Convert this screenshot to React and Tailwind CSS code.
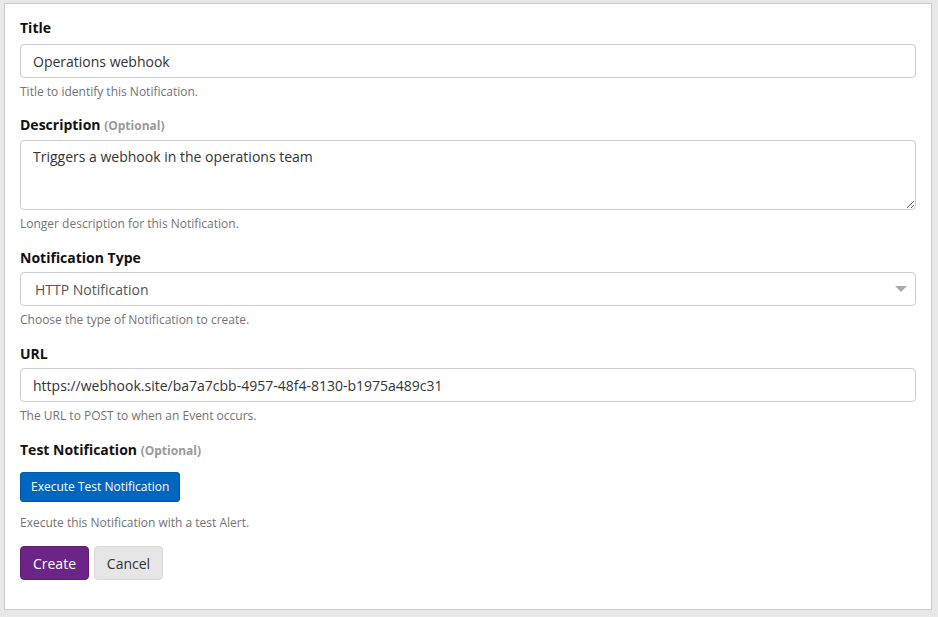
export default function App() {
  const font = { fontFamily: '"Open Sans", "Noto Sans", sans-serif' };
  return (
    <div className="w-[938px] h-[617px] bg-[#e8e8e8] pt-[3px] pl-[4px]" style={font}>
      <div className="w-[928px] h-[607px] bg-white border border-[#cccccc] px-[15px] pt-[14px]">
        <div className="flex flex-col">
          <label className="text-[14px] font-bold text-[#111] leading-[20px]">Title</label>
          <input
            readOnly
            value="Operations webhook"
            className="mt-[6px] h-[34px] w-full border border-[#cccccc] rounded-[4px] px-[12px] text-[14px] text-[#333] outline-none"
            style={font}
          />
          <p className="mt-[5px] text-[12px] text-[#737373] leading-[17px]">Title to identify this Notification.</p>

          <label className="mt-[15px] text-[14px] font-bold text-[#111] leading-[20px]">
            Description <span className="text-[12px] text-[#999]">(Optional)</span>
          </label>
          <textarea
            readOnly
            value="Triggers a webhook in the operations team"
            className="mt-[4px] h-[70px] w-full border border-[#cccccc] rounded-[4px] px-[12px] py-[6px] text-[14px] text-[#333] outline-none leading-[20px] block"
            style={font}
          />
          <p className="mt-[5px] text-[12px] text-[#737373] leading-[17px]">Longer description for this Notification.</p>

          <label className="mt-[16px] text-[14px] font-bold text-[#111] leading-[20px]">Notification Type</label>
          <div className="mt-[4px] h-[34px] w-full border border-[#cccccc] rounded-[4px] pl-[14px] pr-[8px] flex items-center justify-between text-[14px] text-[#555]">
            <span>HTTP Notification</span>
            <svg width="12" height="7" viewBox="0 0 12 7"><path d="M0 0 L12 0 L6 6 Z" fill="#aaaaaa" /></svg>
          </div>
          <p className="mt-[5px] text-[12px] text-[#737373] leading-[17px]">Choose the type of Notification to create.</p>

          <label className="mt-[16px] text-[14px] font-bold text-[#111] leading-[20px]">URL</label>
          <input
            readOnly
            value="https://webhook.site/ba7a7cbb-4957-48f4-8130-b1975a489c31"
            className="mt-[4px] h-[34px] w-full border border-[#cccccc] rounded-[4px] px-[12px] text-[14px] text-[#333] outline-none"
            style={font}
          />
          <p className="mt-[5px] text-[12px] text-[#737373] leading-[17px]">The URL to POST to when an Event occurs.</p>

          <label className="mt-[16px] text-[14px] font-bold text-[#111] leading-[20px]">
            Test Notification <span className="text-[12px] text-[#999]">(Optional)</span>
          </label>
          <div className="mt-[11px] flex">
            <button className="h-[30px] px-[10px] bg-[#0066c0] border border-[#0059a8] rounded-[3px] text-white text-[12px]" style={font}>
              Execute Test Notification
            </button>
          </div>
          <p className="mt-[12px] text-[12px] text-[#737373] leading-[17px]">Execute this Notification with a test Alert.</p>

          <div className="mt-[15px] flex gap-[5px]">
            <button className="h-[34px] w-[69px] bg-[#6b2587] border border-[#5e1f77] rounded-[4px] text-white text-[14px]" style={font}>
              Create
            </button>
            <button className="h-[34px] w-[69px] bg-[#e6e6e6] border border-[#d9d9d9] rounded-[4px] text-[#333] text-[14px]" style={font}>
              Cancel
            </button>
          </div>
        </div>
      </div>
    </div>
  );
}
